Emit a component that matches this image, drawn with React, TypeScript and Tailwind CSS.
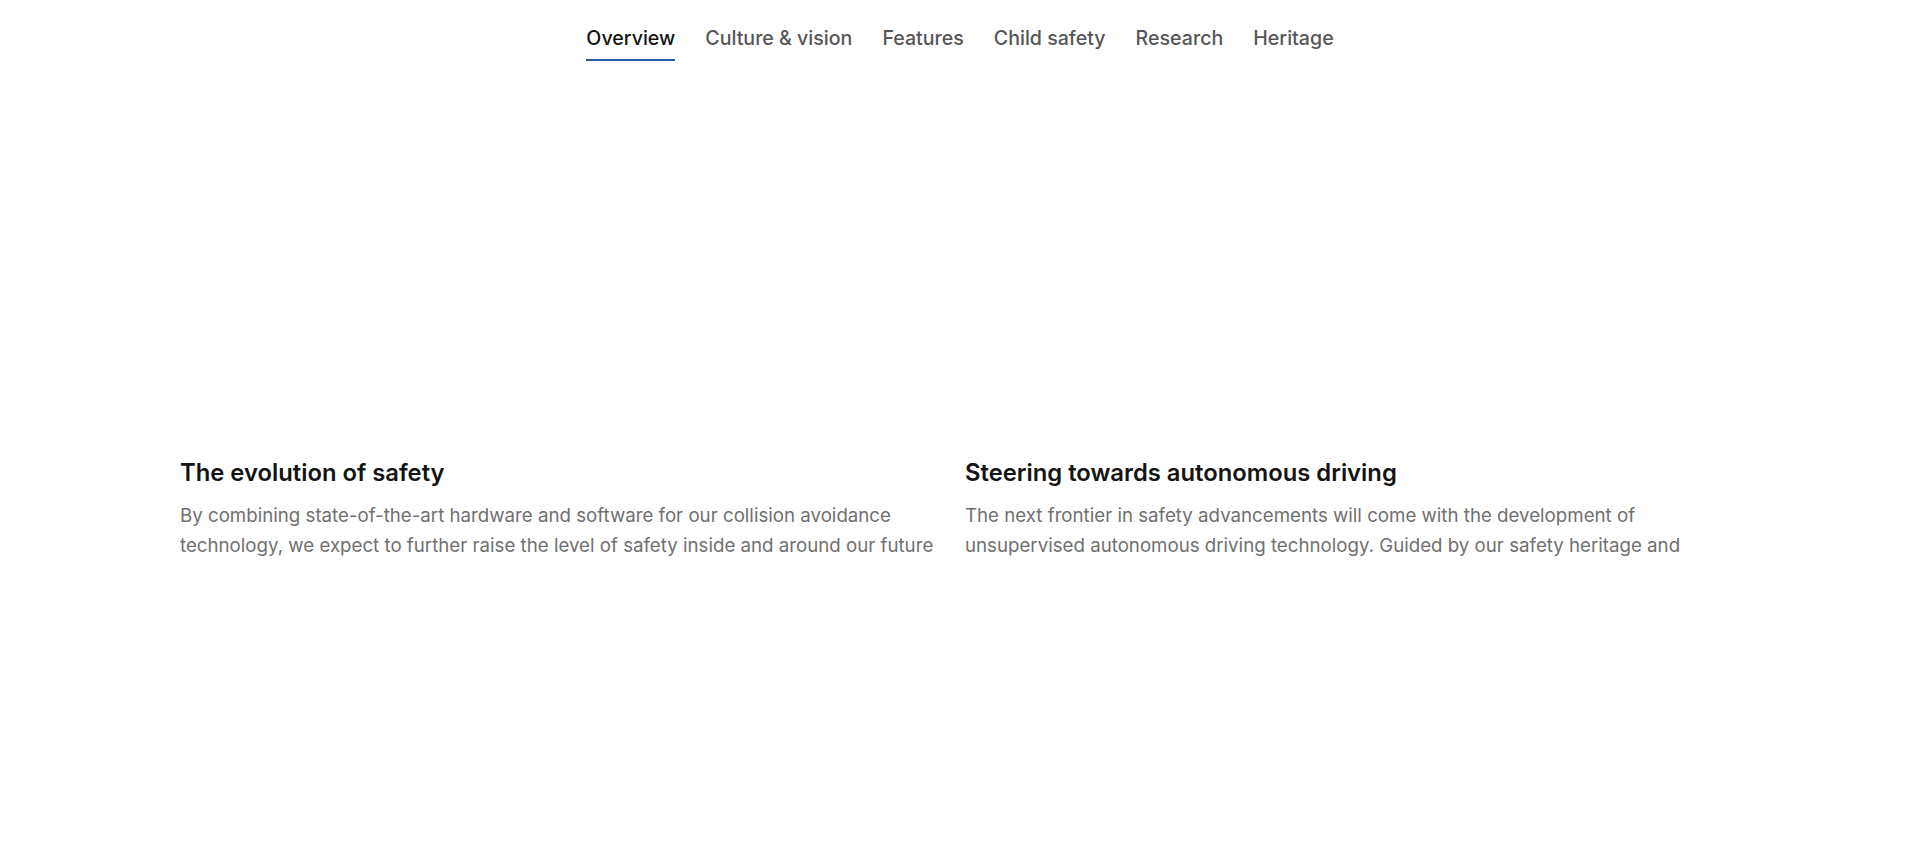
const tabs = ['Overview', 'Culture & vision', 'Features', 'Child safety', 'Research', 'Heritage'];

const columns = [
  {
    title: 'The evolution of safety',
    text: 'By combining state-of-the-art hardware and software for our collision avoidance technology, we expect to further raise the level of safety inside and around our future cars.',
  },
  {
    title: 'Steering towards autonomous driving',
    text: 'The next frontier in safety advancements will come with the development of unsupervised autonomous driving technology. Guided by our safety heritage and expertise, we are working towards it.',
  },
];

export default function App() {
  return (
    <div className="min-h-[847px] bg-white font-['Inter',sans-serif]">
      <nav className="flex justify-center gap-[30px] pt-[26px]">
        {tabs.map((tab, i) => (
          <button
            key={tab}
            className={
              i === 0
                ? 'border-b-2 border-[#2a5ca4] pb-[9px] text-[19.6px] font-medium leading-[24px] text-[#141414]'
                : 'border-b-2 border-transparent pb-[9px] text-[19.6px] font-medium leading-[24px] text-[#565656]'
            }
          >
            {tab}
          </button>
        ))}
      </nav>

      <div className="mt-[398px] grid grid-cols-[762px_762px] gap-[23px] pl-[180px]">
        {columns.map((col) => (
          <div key={col.title}>
            <h3 className="text-[23.8px] font-semibold leading-[28px] text-[#141414]">{col.title}</h3>
            <p className="mt-[14px] h-[60px] overflow-hidden text-[18.7px] leading-[30px] text-[#707070]">
              {col.text}
            </p>
          </div>
        ))}
      </div>
    </div>
  );
}
